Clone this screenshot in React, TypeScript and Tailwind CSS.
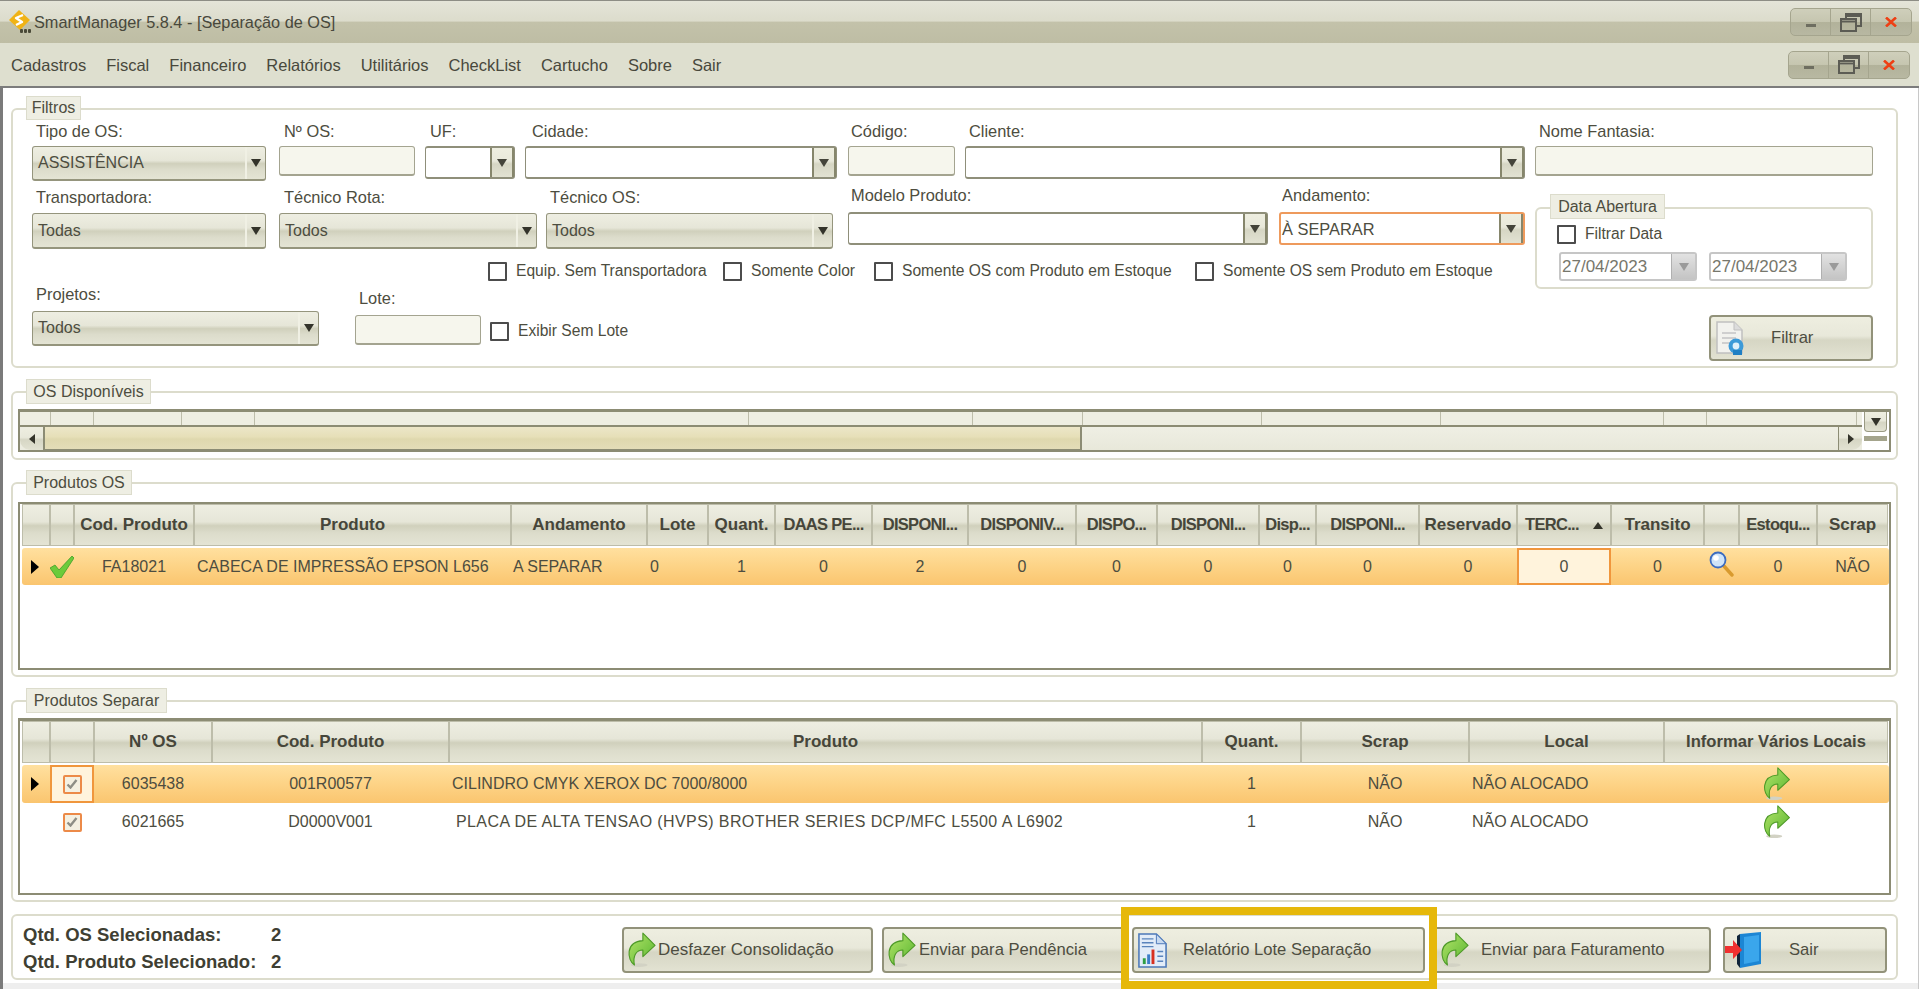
import React from "react";

const gloss = "bg-[linear-gradient(to_bottom,#eeeee2_0%,#e6e6d8_42%,#d0d0bc_52%,#dcdccb_70%,#e4e4d4_100%)]";
const btnGloss = "bg-[linear-gradient(to_bottom,#eeeee0_0%,#e8e8da_45%,#d6d6c4_55%,#e2e2d2_100%)]";

function Tri({ className = "", dir = "down" }: { className?: string; dir?: "down" | "left" | "right" | "up" }) {
  const pts = { down: "0,0 10,0 5,8", up: "0,8 10,8 5,0", left: "8,0 8,10 0,5", right: "0,0 0,10 8,5" }[dir];
  return (
    <svg viewBox={dir === "left" || dir === "right" ? "0 0 8 10" : "0 0 10 8"} preserveAspectRatio="none" className={className}>
      <polygon points={pts} fill="currentColor" />
    </svg>
  );
}

function GroupBox({ title, legend, className = "", children }: { title: string; legend: string; className?: string; children?: React.ReactNode }) {
  return (
    <div className={`relative rounded-[6px] border-2 border-[#dcdccc] ${className}`}>
      <div className={`absolute flex items-center justify-center bg-[#eeeee3] border border-[#dcdccc] text-[#4d4d40] ${legend}`}>{title}</div>
      {children}
    </div>
  );
}

function Field({ label, labelPad = "pl-1", className = "", children }: { label: string; labelPad?: string; className?: string; children: React.ReactNode }) {
  return (
    <div className={`flex flex-col ${className}`}>
      <div className={`h-[18px] leading-[18px] mb-[7px] text-[16.4px] text-[#4d4d40] whitespace-nowrap ${labelPad}`}>{label}</div>
      {children}
    </div>
  );
}

function SelectBox({ value, className = "" }: { value: string; className?: string }) {
  return (
    <div className={`flex items-center ${gloss} border border-[#95957d] border-b-2 rounded-[3px] ${className}`}>
      <span className="flex-1 pl-[5px] text-[#4d4d40] whitespace-nowrap">{value}</span>
      <span className="w-[20px] self-stretch border-l-2 border-l-[#f0f0e4] flex items-center justify-center">
        <Tri className="w-[10px] h-[8px] text-[#33332a]" />
      </span>
    </div>
  );
}

function ComboEdit({ value = "", focus = false, className = "" }: { value?: string; focus?: boolean; className?: string }) {
  return (
    <div className={`flex bg-white rounded-[3px] border ${focus ? "border-[#ee9a5c] border-2" : "border-[#8f8f7a] border-t-2 border-b-2"} ${className}`}>
      <span className="flex-1 pl-[1px] flex items-center text-[16.4px] text-[#4d4d40] whitespace-nowrap">{value}</span>
      <span className={`w-[24px] flex items-center justify-center border-x-2 border-[#86866c] ${btnGloss}`}>
        <Tri className="w-[10px] h-[8px] text-[#44443a]" />
      </span>
    </div>
  );
}

function TextBox({ className = "" }: { className?: string }) {
  return <div className={`bg-[#f6f6ed] border border-[#a4a490] border-b-2 rounded-[3px] ${className}`} />;
}

function Check({ className = "" }: { className?: string }) {
  return <span className={`block w-[19px] h-[19px] bg-white border-2 border-[#4c4c4c] rounded-[1px] ${className}`} />;
}

function CheckLabel({ text, className = "" }: { text: string; className?: string }) {
  return (
    <div className={`flex items-center gap-[9px] text-[15.6px] text-[#4d4d40] whitespace-nowrap ${className}`}>
      <Check />
      <span>{text}</span>
    </div>
  );
}

function DateBox() {
  return (
    <div className="flex w-[138px] h-[29px] border-2 border-[#c6c6c6] rounded-[3px] bg-white">
      <span className="flex-1 pl-[1px] flex items-center text-[17px] text-[#77776c]">27/04/2023</span>
      <span className="w-[24px] flex items-center justify-center bg-[linear-gradient(to_bottom,#e2e2e2,#c4c4c4)] border-l border-[#b0b0b0]">
        <Tri className="w-[10px] h-[8px] text-[#9a9a9a]" />
      </span>
    </div>
  );
}

function GreenArrow({ className = "", id }: { className?: string; id: string }) {
  return (
    <svg viewBox="0 0 32 38" className={className}>
      <defs>
        <linearGradient id={id} x1="0" y1="0" x2="1" y2="1">
          <stop offset="0" stopColor="#b4e46a" />
          <stop offset="1" stopColor="#57b52f" />
        </linearGradient>
      </defs>
      <ellipse cx="14" cy="35" rx="9" ry="2" fill="#d2d2c4" />
      <path d="M18 1 L31 14 L18 26 L18 19 C11 19 7 25 9 35 C1 30 -1 10 18 9 Z" fill={`url(#${id})`} stroke="#4e9a28" strokeWidth="1.2" strokeLinejoin="round" />
    </svg>
  );
}

function Logo() {
  return (
    <svg viewBox="0 0 24 26" className="w-[24px] h-[26px] shrink-0">
      <polygon points="11,1 22,11 12,21 1,11" fill="#f0b316" />
      <path d="M15 6 L8 9 L14 13 L8 16" fill="none" stroke="#fff" strokeWidth="2.4" strokeLinejoin="round" />
      <rect x="12" y="20" width="3" height="4" rx="1" fill="#4a4a38" />
      <rect x="16" y="20" width="3" height="4" rx="1" fill="#4a4a38" />
      <rect x="20" y="20" width="3" height="4" rx="1" fill="#4a4a38" />
    </svg>
  );
}

function WinButtons({ className = "" }: { className?: string }) {
  const seg = "w-[40px] flex items-center justify-center";
  return (
    <div className={`flex h-[28px] rounded-[5px] border border-[#a5a58e] divide-x divide-[#a5a58e] bg-[linear-gradient(to_bottom,#cfcfbb_0%,#c6c6b0_48%,#b2b29a_52%,#b8b8a2_100%)] ${className}`}>
      <span className={seg}>
        <span className="block w-[10px] h-[3px] mt-[6px] bg-[#6e6e60]" />
      </span>
      <span className={seg}>
        <svg viewBox="0 0 22 19" className="w-[22px] h-[19px]" fill="none" stroke="#5c5c54" strokeWidth="2">
          <rect x="1" y="6" width="15" height="12" />
          <path d="M1 8.5 H16" />
          <path d="M6 5 V1 H21 V13 H17" />
          <path d="M6 3 H21" />
        </svg>
      </span>
      <span className={`${seg} text-[#ee3f14]`}>
        <svg viewBox="0 0 12 10" className="w-[12px] h-[10px]" fill="none" stroke="currentColor" strokeWidth="2.6">
          <path d="M1 0.5 L11 9.5 M11 0.5 L1 9.5" />
        </svg>
      </span>
    </div>
  );
}

function ActionButton({ className = "", children }: { className?: string; children: React.ReactNode }) {
  return (
    <div className={`flex items-center h-[46px] rounded-[4px] border-2 border-[#92927a] text-[16.6px] text-[#4d4d40] whitespace-nowrap ${btnGloss} ${className}`}>
      {children}
    </div>
  );
}

const osCols = [29, 43, 88, 73, 494, 224, 110, 179, 179, 223, 43, 150];

const prodHeaders = ["", "", "Cod. Produto", "Produto", "Andamento", "Lote", "Quant.", "DAAS PE...", "DISPONI...", "DISPONIV...", "DISPO...", "DISPONI...", "Disp...", "DISPONI...", "Reservado", "TERC...", "Transito", "", "Estoqu...", "Scrap"];
const prodCols = "grid-cols-[28px_24px_120px_317px_136px_61px_67px_97px_96px_108px_81px_102px_57px_103px_98px_94px_93px_35px_78px_71px]";
const sepHeaders = ["", "", "Nº OS", "Cod. Produto", "Produto", "Quant.", "Scrap", "Local", "Informar Vários Locais"];
const sepCols = "grid-cols-[28px_44px_118px_237px_753px_99px_168px_195px_224px]";

function Header({ labels, cols }: { labels: string[]; cols: string }) {
  return (
    <div className={`grid ${cols} ml-[2px] h-[42px]`}>
      {labels.map((l, i) => (
        <div key={i} className={`flex items-center justify-center overflow-hidden whitespace-nowrap font-bold text-[#46463a] border border-[#bdbdaa] ${l.endsWith("...") ? "text-[16.5px] tracking-[-0.7px] pb-[3px]" : l.length > 20 ? "text-[16.6px]" : "text-[17px]"} ${gloss}`}>
          {l}
          {l === "TERC..." && <Tri dir="up" className="w-[10px] h-[7px] ml-[14px] mt-[3px] text-[#33332a]" />}
        </div>
      ))}
    </div>
  );
}

function RowArrow() {
  return <Tri dir="right" className="w-[8px] h-[14px] ml-[9px] text-black" />;
}

function Cell({ children, className = "" }: { children?: React.ReactNode; className?: string }) {
  return <div className={`flex items-center justify-center whitespace-nowrap overflow-hidden ${className}`}>{children}</div>;
}

function MiniCheck() {
  return (
    <span className="flex items-center justify-center w-[19px] h-[19px] rounded-[2px] border-2 border-[#ec8a48] bg-[#f4f0e2]">
      <svg viewBox="0 0 12 10" className="w-[12px] h-[10px]" fill="none" stroke="#8e8e86" strokeWidth="2.4">
        <path d="M1.5 5.5 L4.5 8.5 L10.5 1" />
      </svg>
    </span>
  );
}

const rowOrange = "bg-[linear-gradient(to_bottom,#ffe09f_0%,#fdd386_50%,#fac56f_100%)]";

export default function App() {
  return (
    <div className="w-[1919px] h-[989px] overflow-hidden bg-white text-[16px] leading-[20px] [font-family:'Liberation_Sans',sans-serif] flex flex-col">
      {/* title bar */}
      <div className="h-[43px] shrink-0 flex items-center pl-[8px] pr-[7px] border-t border-[#8d8d85] bg-[linear-gradient(to_bottom,#e4e4d8_0%,#dcdccc_48%,#c3c2aa_50%,#bebda4_100%)]">
        <Logo />
        <span className="ml-[2px] text-[16.3px] text-[#48483c]">SmartManager 5.8.4 - [Separação de OS]</span>
        <WinButtons className="ml-auto" />
      </div>
      {/* menu */}
      <div className="h-[43px] shrink-0 flex items-center pl-[11px] pr-[9px] gap-[20px] bg-[#dedfcf] text-[16.5px] text-[#48483c]">
        {["Cadastros", "Fiscal", "Financeiro", "Relatórios", "Utilitários", "CheckList", "Cartucho", "Sobre", "Sair"].map((m) => (
          <span key={m}>{m}</span>
        ))}
        <WinButtons className="ml-auto" />
      </div>
      <div className="h-[2px] shrink-0 bg-[#7c7c7c]" />

      {/* client area */}
      <div className="flex-1 flex flex-col border-l-[3px] border-l-[#7a7a7a] border-r border-r-[#c8c8c8] pl-[8px] pr-[20px]">
        {/* Filtros */}
        <GroupBox title="Filtros" legend="left-[13px] -top-[14px] w-[55px] h-[24px]" className="mt-[20px] h-[260px] pt-[11px] pl-[19px] pr-[23px] shrink-0">
          <div className="flex">
            <Field label="Tipo de OS:" labelPad="pl-1 pt-[1px]" className="w-[234px] mr-[13px]"><SelectBox value="ASSISTÊNCIA" className="h-[35px]" /></Field>
            <Field label="Nº OS:" labelPad="pl-[5px] pt-[1px]" className="w-[136px] mr-[10px]"><TextBox className="h-[30px]" /></Field>
            <Field label="UF:" labelPad="pl-[5px] pt-[1px]" className="w-[90px] mr-[10px]"><ComboEdit className="h-[33px]" /></Field>
            <Field label="Cidade:" labelPad="pl-[7px] pt-[1px]" className="w-[312px] mr-[11px]"><ComboEdit className="h-[33px]" /></Field>
            <Field label="Código:" labelPad="pl-[3px] pt-[1px]" className="w-[107px] mr-[10px]"><TextBox className="h-[30px]" /></Field>
            <Field label="Cliente:" labelPad="pl-1 pt-[1px]" className="w-[560px] mr-[10px]"><ComboEdit className="h-[33px]" /></Field>
            <Field label="Nome Fantasia:" labelPad="pl-1 pt-[1px]" className="w-[338px]"><TextBox className="h-[30px]" /></Field>
          </div>
          <div className="flex mt-[7px]">
            <div className="w-[1503px] shrink-0">
              <div className="flex items-start">
                <Field label="Transportadora:" className="w-[234px] mr-[13px]"><SelectBox value="Todas" className="h-[36px]" /></Field>
                <Field label="Técnico Rota:" labelPad="pl-[5px]" className="w-[258px] mr-[9px]"><SelectBox value="Todos" className="h-[36px]" /></Field>
                <Field label="Técnico OS:" labelPad="pl-[4px]" className="w-[287px] mr-[15px]"><SelectBox value="Todos" className="h-[36px]" /></Field>
                <Field label="Modelo Produto:" labelPad="pl-[3px]" className="w-[420px] mr-[11px] -mt-[2px]"><ComboEdit className="h-[33px] mt-[1px]" /></Field>
                <Field label="Andamento:" labelPad="pl-[3px]" className="w-[246px] -mt-[2px]"><ComboEdit value="À SEPARAR" focus className="h-[33px] mt-[1px]" /></Field>
              </div>
              <div className="flex items-center ml-[456px] mt-[12px] h-[20px]">
                <CheckLabel text="Equip. Sem Transportadora" className="w-[235px]" />
                <CheckLabel text="Somente Color" className="w-[151px]" />
                <CheckLabel text="Somente OS com Produto em Estoque" className="w-[321px]" />
                <CheckLabel text="Somente OS sem Produto em Estoque" />
              </div>
              <div className="flex items-start mt-[3px]">
                <Field label="Projetos:" labelPad="pl-1 pt-[1px]" className="w-[287px] mr-[36px]"><SelectBox value="Todos" className="h-[35px] mt-[2px]" /></Field>
                <Field label="Lote:" className="w-[126px] mr-[9px] mt-[5px]"><TextBox className="h-[30px] mt-[1px]" /></Field>
                <CheckLabel text="Exibir Sem Lote" className="mt-[37px]" />
              </div>
            </div>
            <div className="w-[338px] shrink-0 flex flex-col items-end">
              <GroupBox title="Data Abertura" legend="left-[13px] -top-[15px] w-[115px] h-[25px]" className="w-full h-[82px] mt-[19px] pt-[15px] pl-[22px] border-[#d8d8c8]">
                <CheckLabel text="Filtrar Data" className="-ml-[2px]" />
                <div className="flex gap-[12px] mt-[8px]">
                  <DateBox />
                  <DateBox />
                </div>
              </GroupBox>
              <ActionButton className="w-[164px] mt-[26px] pl-[3px]">
                <svg viewBox="0 0 32 38" className="w-[32px] h-[38px] shrink-0">
                  <path d="M3 3 H20 L28 11 V34 H3 Z" fill="#f2f2ee" stroke="#c0c0c0" strokeWidth="1.5" />
                  <path d="M20 3 V11 H28" fill="#dcdcdc" stroke="#c0c0c0" />
                  <path d="M8 14 H22 M8 19 H22 M8 24 H16" stroke="#cfcfcf" strokeWidth="2" />
                  <circle cx="22" cy="27" r="7.5" fill="#3c9ad8" />
                  <circle cx="22" cy="27" r="3.4" fill="#dff0fa" />
                  <path d="M19 31 L28 31 L28 36 L19 36 Z" fill="#1f7fc4" />
                </svg>
                <span className="ml-[25px]">Filtrar</span>
              </ActionButton>
            </div>
          </div>
        </GroupBox>

        {/* OS Disponíveis */}
        <GroupBox title="OS Disponíveis" legend="left-[13px] -top-[14px] w-[125px] h-[25px]" className="mt-[23px] h-[69px] pt-[16px] pl-[5px] pr-[5px] shrink-0">
          <div className="flex h-[43px] border-t-[3px] border-l-2 border-r-2 border-b-2 border-[#8c8c74] bg-[#eeeee2]">
            <div className="flex-1 flex flex-col min-w-0">
              <div className="h-[13px] flex pl-[2px] shrink-0">
                {osCols.map((w, i) => (
                  <div key={i} style={{ width: w }} className="border-r border-[#bdbdaa] bg-[#eeeee2]" />
                ))}
              </div>
              <div className="flex-1 flex border-t-2 border-[#8c8c74] bg-[#ecece0]">
                <div className={`w-[25px] flex items-center justify-center rounded-l-[10px] border-r-2 border-[#8c8c74] ${btnGloss}`}>
                  <Tri dir="left" className="w-[6px] h-[10px] text-[#33332a]" />
                </div>
                <div className="w-[1037px] border-r-2 border-b border-[#8c8c74] bg-[linear-gradient(to_bottom,#ece6c8_0%,#e6dfb8_45%,#dfd8ae_55%,#e4ddb8_100%)]" />
                <div className="flex-1 bg-[linear-gradient(to_bottom,#efefe4,#e8e8da)]" />
                <div className={`w-[24px] flex items-center justify-center rounded-r-[10px] border-l border-[#8c8c74] ${btnGloss}`}>
                  <Tri dir="right" className="w-[6px] h-[10px] text-[#33332a]" />
                </div>
              </div>
            </div>
            <div className="w-[27px] shrink-0 bg-white flex flex-col items-center">
              <div className={`w-[23px] h-[20px] flex items-center justify-center border-x border-b border-[#9a9a84] rounded-b-[4px] ${btnGloss}`}>
                <Tri className="w-[10px] h-[8px] text-[#33332a]" />
              </div>
              <div className="w-[23px] h-[5px] mt-[4px] bg-[#a4a48c]" />
            </div>
          </div>
        </GroupBox>

        {/* Produtos OS */}
        <GroupBox title="Produtos OS" legend="left-[13px] -top-[14px] w-[106px] h-[25px]" className="mt-[22px] h-[195px] pt-[18px] pl-[5px] pr-[5px] shrink-0">
          <div className="h-[168px] border-t-2 border-l-2 border-r-2 border-b-2 border-[#8c8c74] bg-white">
            <Header labels={prodHeaders} cols={prodCols} />
            <div className={`grid ${prodCols} ml-[2px] h-[37px] mt-[2px] rounded-[3px] text-[#4d4d40] ${rowOrange}`}>
              <Cell className="justify-start"><RowArrow /></Cell>
              <Cell>
                <svg viewBox="0 0 26 22" className="w-[26px] h-[22px] shrink-0">
                  <path d="M1 12 L6 9 L10 14 L23 0 L25 2 L12 22 L8 22 Z" fill="#6ccb3a" stroke="#3f9e2a" strokeWidth="0.8" />
                </svg>
              </Cell>
              <Cell>FA18021</Cell>
              <Cell className="justify-start pl-[3px]">CABECA DE IMPRESSÃO EPSON L656</Cell>
              <Cell className="justify-start pl-[2px]">A SEPARAR</Cell>
              <Cell className="justify-start pl-[3px]">0</Cell>
              <Cell>1</Cell>
              <Cell>0</Cell>
              <Cell>2</Cell>
              <Cell>0</Cell>
              <Cell>0</Cell>
              <Cell>0</Cell>
              <Cell>0</Cell>
              <Cell>0</Cell>
              <Cell>0</Cell>
              <Cell className="bg-[#fff3dc] border-2 border-[#f0963c]">0</Cell>
              <Cell>0</Cell>
              <Cell>
                <svg viewBox="0 0 26 26" className="w-[26px] h-[26px] shrink-0 -mt-[6px]">
                  <path d="M14 14 L23 24" stroke="#d99a2e" strokeWidth="3.4" strokeLinecap="round" />
                  <circle cx="9" cy="9" r="7.5" fill="#cfe4f8" stroke="#3c6cc0" strokeWidth="1.8" />
                  <circle cx="7" cy="7" r="2.8" fill="#fff" />
                </svg>
              </Cell>
              <Cell>0</Cell>
              <Cell>NÃO</Cell>
            </div>
          </div>
        </GroupBox>

        {/* Produtos Separar */}
        <GroupBox title="Produtos Separar" legend="left-[13px] -top-[14px] w-[141px] h-[25px]" className="mt-[23px] h-[202px] pt-[16px] pl-[5px] pr-[5px] shrink-0">
          <div className="h-[177px] border-t-[3px] border-l-2 border-r-2 border-b-2 border-[#8c8c74] bg-white">
            <Header labels={sepHeaders} cols={sepCols} />
            <div className={`grid ${sepCols} ml-[2px] h-[38px] mt-[2px] rounded-[3px] text-[#4d4d40] ${rowOrange}`}>
              <Cell className="justify-start"><RowArrow /></Cell>
              <Cell className="bg-[#fff3dc] border-2 border-[#f0963c]"><MiniCheck /></Cell>
              <Cell>6035438</Cell>
              <Cell>001R00577</Cell>
              <Cell className="justify-start pl-[3px]">CILINDRO CMYK XEROX DC 7000/8000</Cell>
              <Cell>1</Cell>
              <Cell>NÃO</Cell>
              <Cell className="justify-start pl-[3px]">NÃO ALOCADO</Cell>
              <Cell><GreenArrow id="ga1" className="w-[30px] h-[34px]" /></Cell>
            </div>
            <div className={`grid ${sepCols} ml-[2px] h-[38px] text-[#4d4d40]`}>
              <Cell />
              <Cell><MiniCheck /></Cell>
              <Cell>6021665</Cell>
              <Cell>D0000V001</Cell>
              <Cell className="justify-start pl-[7px] tracking-[0.4px]">PLACA DE ALTA TENSAO (HVPS) BROTHER SERIES DCP/MFC L5500 A L6902</Cell>
              <Cell>1</Cell>
              <Cell>NÃO</Cell>
              <Cell className="justify-start pl-[3px]">NÃO ALOCADO</Cell>
              <Cell><GreenArrow id="ga2" className="w-[30px] h-[34px]" /></Cell>
            </div>
          </div>
        </GroupBox>

        {/* Footer */}
        <GroupBox title="" legend="hidden" className="mt-[12px] h-[66px] pt-[6px] pl-[10px] pr-[9px] shrink-0 flex items-center">
          <div className="flex flex-col gap-[7px] -mt-[3px] font-bold text-[18.5px] text-[#3f3f33] w-[599px] shrink-0">
            <div className="flex h-[20px]"><span className="w-[248px] whitespace-nowrap">Qtd. OS Selecionadas:</span><span>2</span></div>
            <div className="flex h-[20px]"><span className="w-[248px] whitespace-nowrap">Qtd. Produto Selecionado:</span><span>2</span></div>
          </div>
          <div className="flex">
            <ActionButton className="w-[251px] mr-[9px] pl-[2px]">
              <GreenArrow id="ga3" className="w-[30px] h-[36px] shrink-0" />
              <span className="ml-[2px] text-[17px]">Desfazer Consolidação</span>
            </ActionButton>
            <ActionButton className="w-[243px] mr-[7px] pl-[2px]">
              <GreenArrow id="ga4" className="w-[30px] h-[36px] shrink-0" />
              <span className="ml-[3px]">Enviar para Pendência</span>
            </ActionButton>
            <div className="relative mr-[8px]">
              <ActionButton className="w-[293px] pl-[3px]">
                <svg viewBox="0 0 32 38" className="w-[31px] h-[37px] shrink-0">
                  <path d="M2 2 H20 L30 12 V36 H2 Z" fill="#e2ecf8" stroke="#4c78b8" strokeWidth="1.6" />
                  <path d="M20 2 V12 H30 Z" fill="#c8daf0" stroke="#4c78b8" strokeWidth="1" />
                  <path d="M5 7 H17 M5 11 H17 M5 15 H17" stroke="#5a84bc" strokeWidth="1.5" />
                  <path d="M21 20 H27 M21 25 H27 M21 30 H27" stroke="#5a84bc" strokeWidth="1.5" />
                  <rect x="6" y="27" width="3" height="6" fill="#2f9e44" />
                  <rect x="10.5" y="23" width="3" height="10" fill="#3c7dc8" />
                  <rect x="15" y="18" width="3" height="15" fill="#d83020" />
                </svg>
                <span className="ml-[15px]">Relatório Lote Separação</span>
              </ActionButton>
              <div className="absolute -left-[11px] -right-[12px] -top-[20px] -bottom-[16px] border-[8px] border-[#e6b80a] pointer-events-none" />
            </div>
            <ActionButton className="w-[278px] mr-[12px] pl-[4px]">
              <GreenArrow id="ga5" className="w-[30px] h-[36px] shrink-0" />
              <span className="ml-[12px]">Enviar para Faturamento</span>
            </ActionButton>
            <ActionButton className="w-[164px]">
              <svg viewBox="0 0 38 38" className="w-[38px] h-[38px] shrink-0">
                <path d="M15 3 L36 1 V33 L15 37 Z" fill="#1c86d4" />
                <path d="M15 3 L12 5 V33 L15 37 Z" fill="#10243a" />
                <path d="M19 6 L34 4 V30 L19 33 Z" fill="#3aa6ec" />
                <path d="M0 15 H8 V9 L17 19 L8 28 V22 H0 Z" fill="#f03030" />
              </svg>
              <span className="ml-[26px]">Sair</span>
            </ActionButton>
          </div>
        </GroupBox>
        <div className="h-[6px] mt-[3px] -ml-[8px] -mr-[20px] bg-[#eeeeee] shrink-0" />
      </div>
    </div>
  );
}
